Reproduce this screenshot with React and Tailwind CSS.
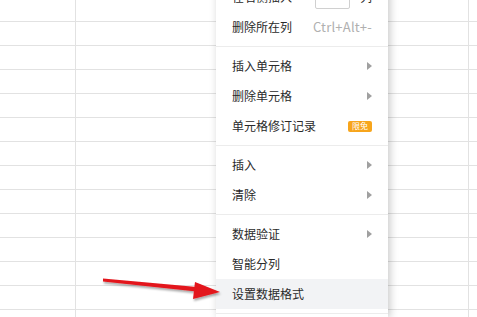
import React from "react";

const Tri = () => (
  <svg width="5" height="8" viewBox="0 0 5 8" className="block">
    <path d="M0 0 L5 4 L0 8 Z" fill="#a0a0a0" />
  </svg>
);

const Row = ({ children, right, active }) => (
  <div
    className={`h-[30px] flex items-center justify-between pl-4 pr-4 ${active ? "bg-[#f2f3f5]" : ""}`}
  >
    <span className="text-[12px] text-[#2a2a2a]">{children}</span>
    {right}
  </div>
);

const Sep = () => (
  <div className="py-1">
    <div className="h-px bg-[#ececec]" />
  </div>
);

export default function App() {
  const rows = Array.from({ length: 13 });
  return (
    <div
      className="relative w-[477px] h-[317px] overflow-hidden bg-white"
      style={{ fontFamily: '"Noto Sans CJK SC", "Noto Sans", sans-serif' }}
    >
      {/* grid */}
      <div className="flex flex-col">
        <div className="h-[22px] border-b border-[#e2e2e2] flex">
          <div className="w-[76px] border-r border-[#e2e2e2]" />
          <div className="w-[393px] border-r border-[#e2e2e2]" />
        </div>
        {rows.map((_, i) => (
          <div key={i} className="h-[24px] border-b border-[#e2e2e2] flex">
            <div className="w-[76px] border-r border-[#e2e2e2]" />
            <div className="w-[393px] border-r border-[#e2e2e2]" />
          </div>
        ))}
      </div>

      {/* menu */}
      <div className="absolute left-[216px] top-[-18px] w-[172px] bg-white shadow-[2px_0_8px_rgba(0,0,0,0.22)]">
        <div className="h-[30px] flex items-center pl-4 pr-4">
          <span className="text-[12px] text-[#2a2a2a]">在右侧插入</span>
          <div className="ml-auto mt-[4px] w-[35px] h-[20px] border border-[#d0d0d0] rounded-[2px]" />
          <span className="ml-[10px] text-[12px] text-[#2a2a2a]">列</span>
        </div>
        <Row right={<span className="text-[13px] tracking-[0.2px] text-[#b0b0b0]">Ctrl+Alt+-</span>}>删除所在列</Row>
        <Sep />
        <Row right={<Tri />}>插入单元格</Row>
        <Row right={<Tri />}>删除单元格</Row>
        <Row
          right={
            <span className="h-[11px] w-[24px] flex items-center justify-center rounded-[2px] bg-[#f7a51c] text-white text-[8px] leading-none">
              限免
            </span>
          }
        >
          单元格修订记录
        </Row>
        <Sep />
        <Row right={<Tri />}>插入</Row>
        <Row right={<Tri />}>清除</Row>
        <Sep />
        <Row right={<Tri />}>数据验证</Row>
        <Row>智能分列</Row>
        <Row active>设置数据格式</Row>
        <Sep />
      </div>

      {/* red arrow */}
      <svg className="absolute left-0 top-0" width="477" height="317" viewBox="0 0 477 317">
        <defs>
          <filter id="sh" x="-10%" y="-50%" width="120%" height="200%">
            <feDropShadow dx="1" dy="2" stdDeviation="1.2" floodColor="#000" floodOpacity="0.35" />
          </filter>
        </defs>
        <g filter="url(#sh)">
          <path d="M103 278.5 L197 287 L196.5 291.5 L103 281.5 Z" fill="#e3151b" />
          <path d="M195 282 L220 292 L193 299 Z" fill="#e3151b" />
        </g>
      </svg>
    </div>
  );
}
